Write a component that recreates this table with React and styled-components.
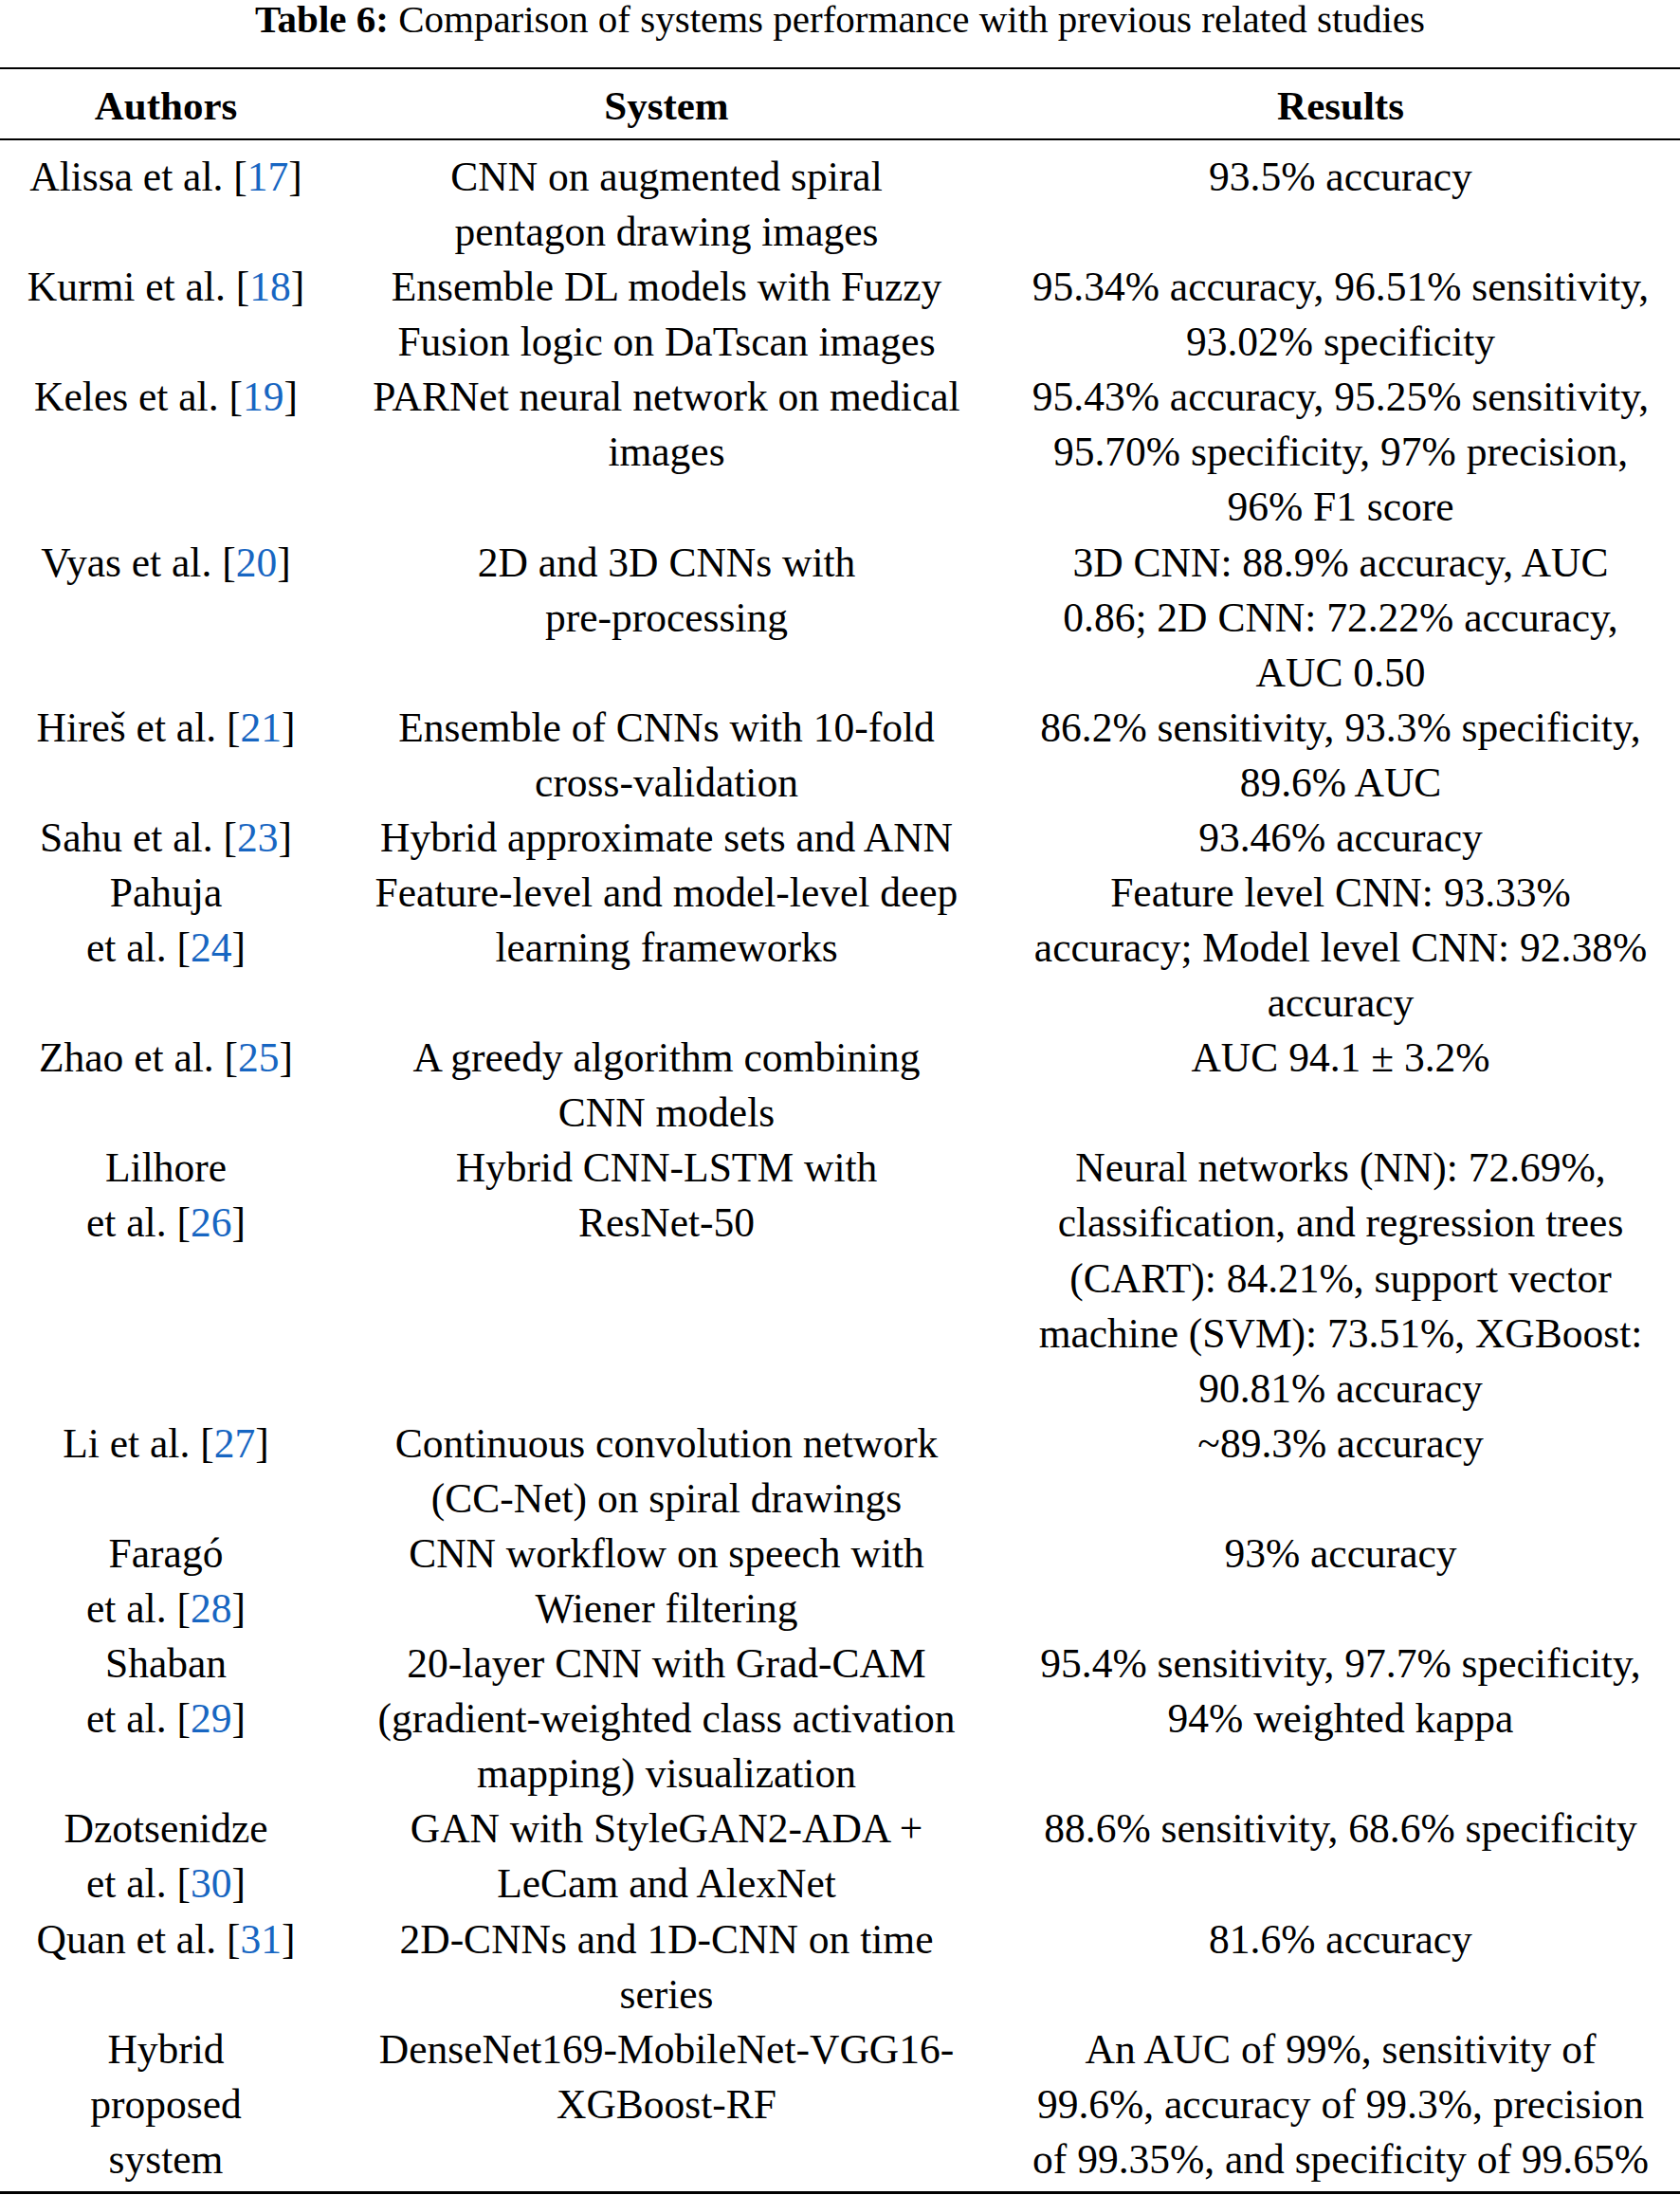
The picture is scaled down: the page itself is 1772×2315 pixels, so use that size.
import React from 'react';
import styled, { createGlobalStyle } from 'styled-components';

const GlobalStyle = createGlobalStyle`
    html, body {
        margin: 0;
        padding: 0;
        background: #ffffff;
    }
    body {
        font-family: "Liberation Serif", "Times New Roman", serif;
        color: #000000;
    }
`

const Page = styled.div`
    width: 1772px;
    background: #ffffff;
`
const Caption = styled.div`
    font-size: 41px;
    line-height: 40px;
    text-align: center;
    margin-bottom: 31px;
    white-space: nowrap;
`
const CaptionLabel = styled.span`
    font-weight: 700;
`
const Table = styled.div`
    border-top: 2px solid #000;
    border-bottom: 3px solid #000;
`
const Row = styled.div`
    display: grid;
    grid-template-columns: 350px 706px 716px;
`
const HeaderRow = styled(Row)`
    padding: 10px 0 5px;
    border-bottom: 2px solid #000;
`
const Body = styled.div`
    padding: 9px 0 5px;
`
const Cell = styled.div`
    font-size: ${props => props.$head ? '43px' : '43.5px'};
    line-height: ${props => props.$head ? '58px' : '58.08px'};
    font-weight: ${props => props.$head ? 700 : 400};
    text-align: center;
    white-space: nowrap;
`
const Line = styled.div``
const Ref = styled.span`
    color: #1766c2;
`

const rows = [
    { author: ['Alissa et al.'], ref: 17, system: ['CNN on augmented spiral', 'pentagon drawing images'], results: ['93.5% accuracy'] },
    { author: ['Kurmi et al.'], ref: 18, system: ['Ensemble DL models with Fuzzy', 'Fusion logic on DaTscan images'], results: ['95.34% accuracy, 96.51% sensitivity,', '93.02% specificity'] },
    { author: ['Keles et al.'], ref: 19, system: ['PARNet neural network on medical', 'images'], results: ['95.43% accuracy, 95.25% sensitivity,', '95.70% specificity, 97% precision,', '96% F1 score'] },
    { author: ['Vyas et al.'], ref: 20, system: ['2D and 3D CNNs with', 'pre-processing'], results: ['3D CNN: 88.9% accuracy, AUC', '0.86; 2D CNN: 72.22% accuracy,', 'AUC 0.50'] },
    { author: ['Hireš et al.'], ref: 21, system: ['Ensemble of CNNs with 10-fold', 'cross-validation'], results: ['86.2% sensitivity, 93.3% specificity,', '89.6% AUC'] },
    { author: ['Sahu et al.'], ref: 23, system: ['Hybrid approximate sets and ANN'], results: ['93.46% accuracy'] },
    { author: ['Pahuja', 'et al.'], ref: 24, system: ['Feature-level and model-level deep', 'learning frameworks'], results: ['Feature level CNN: 93.33%', 'accuracy; Model level CNN: 92.38%', 'accuracy'] },
    { author: ['Zhao et al.'], ref: 25, system: ['A greedy algorithm combining', 'CNN models'], results: ['AUC 94.1 ± 3.2%'] },
    { author: ['Lilhore', 'et al.'], ref: 26, system: ['Hybrid CNN-LSTM with', 'ResNet-50'], results: ['Neural networks (NN): 72.69%,', 'classification, and regression trees', '(CART): 84.21%, support vector', 'machine (SVM): 73.51%, XGBoost:', '90.81% accuracy'] },
    { author: ['Li et al.'], ref: 27, system: ['Continuous convolution network', '(CC-Net) on spiral drawings'], results: ['~89.3% accuracy'] },
    { author: ['Faragó', 'et al.'], ref: 28, system: ['CNN workflow on speech with', 'Wiener filtering'], results: ['93% accuracy'] },
    { author: ['Shaban', 'et al.'], ref: 29, system: ['20-layer CNN with Grad-CAM', '(gradient-weighted class activation', 'mapping) visualization'], results: ['95.4% sensitivity, 97.7% specificity,', '94% weighted kappa'] },
    { author: ['Dzotsenidze', 'et al.'], ref: 30, system: ['GAN with StyleGAN2-ADA +', 'LeCam and AlexNet'], results: ['88.6% sensitivity, 68.6% specificity'] },
    { author: ['Quan et al.'], ref: 31, system: ['2D-CNNs and 1D-CNN on time', 'series'], results: ['81.6% accuracy'] },
    { author: ['Hybrid', 'proposed', 'system'], system: ['DenseNet169-MobileNet-VGG16-', 'XGBoost-RF'], results: ['An AUC of 99%, sensitivity of', '99.6%, accuracy of 99.3%, precision', 'of 99.35%, and specificity of 99.65%'] },
]

const Lines = ({ lines }) => lines.map((l, i) => <Line key={i}>{l}</Line>)

const AuthorCell = ({ lines, refNo }) => (
    <Cell>
        {lines.map((l, i) => (
            <Line key={i}>
                {l}
                {refNo && i === lines.length - 1 ? <> [<Ref>{refNo}</Ref>]</> : null}
            </Line>
        ))}
    </Cell>
)

const App = () => (
    <Page>
        <GlobalStyle />
        <Caption>
            <CaptionLabel>Table 6:</CaptionLabel> Comparison of systems performance with previous related studies
        </Caption>
        <Table>
            <HeaderRow>
                <Cell $head>Authors</Cell>
                <Cell $head>System</Cell>
                <Cell $head>Results</Cell>
            </HeaderRow>
            <Body>
                {rows.map((row, i) => (
                    <Row key={i}>
                        <AuthorCell lines={row.author} refNo={row.ref} />
                        <Cell><Lines lines={row.system} /></Cell>
                        <Cell><Lines lines={row.results} /></Cell>
                    </Row>
                ))}
            </Body>
        </Table>
    </Page>
);

export default App;
